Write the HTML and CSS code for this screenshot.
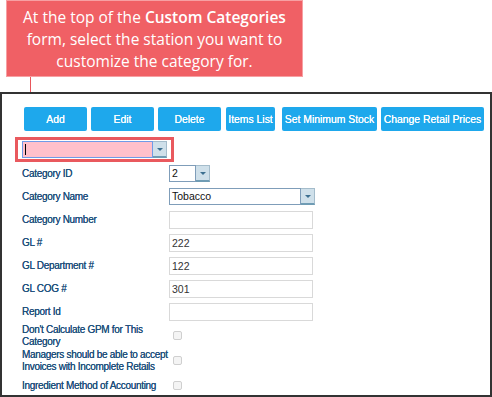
FILE: index.html
```html
<!DOCTYPE html>
<html lang="en">

<head>
  <meta charset="UTF-8">
  <title>Custom Categories</title>
  <link rel="stylesheet" href="styles.css">
</head>

<body>
  <div class="callout">
    At the top of the <b>Custom Categories</b> form, select the station you want to customize the category for.
  </div>
  <div class="connector"></div>

  <div class="frame">
    <div class="toolbar">
      <button class="btn b-add">Add</button>
      <button class="btn b-edit">Edit</button>
      <button class="btn b-delete">Delete</button>
      <button class="btn b-items">Items List</button>
      <button class="btn b-stock">Set Minimum Stock</button>
      <button class="btn b-prices">Change Retail Prices</button>
    </div>

    <div class="station">
      <div class="combo pink">
        <span class="combo-text"><i class="caret"></i></span>
        <span class="combo-btn"><i class="arrow"></i></span>
      </div>
    </div>

    <div class="form">
      <div class="row">
        <label>Category ID</label>
        <div class="combo small">
          <span class="combo-text">2</span>
          <span class="combo-btn"><i class="arrow"></i></span>
        </div>
      </div>
      <div class="row">
        <label>Category Name</label>
        <div class="combo wide">
          <span class="combo-text">Tobacco</span>
          <span class="combo-btn"><i class="arrow"></i></span>
        </div>
      </div>
      <div class="row">
        <label>Category Number</label>
        <input class="field" type="text" value="">
      </div>
      <div class="row">
        <label>GL #</label>
        <input class="field" type="text" value="222">
      </div>
      <div class="row">
        <label>GL Department #</label>
        <input class="field" type="text" value="122">
      </div>
      <div class="row">
        <label>GL COG #</label>
        <input class="field" type="text" value="301">
      </div>
      <div class="row">
        <label>Report Id</label>
        <input class="field" type="text" value="">
      </div>
      <div class="row check">
        <label>Don't Calculate GPM for This Category</label>
        <span class="box"></span>
      </div>
      <div class="row check">
        <label>Managers should be able to accept Invoices with Incomplete Retails</label>
        <span class="box"></span>
      </div>
      <div class="row check">
        <label>Ingredient Method of Accounting</label>
        <span class="box"></span>
      </div>
    </div>
  </div>
</body>

</html>
```

FILE: styles.css
```css
* {
  margin: 0;
  padding: 0;
  box-sizing: border-box;
}

body {
  background: #fff;
  font-family: "Liberation Sans", Arial, sans-serif;
}

.callout {
  margin-left: 6px;
  width: 297px;
  height: 77px;
  padding-top: 5px;
  background: #f06065;
  border: 1px solid #f7a0a3;
  color: #fff;
  font-family: "Open Sans", sans-serif;
  font-size: 15.5px;
  line-height: 22px;
  text-align: center;
}

.callout b {
  font-weight: 600;
}

.connector {
  margin-left: 30px;
  width: 1px;
  height: 15px;
  background: #e8565b;
}

.frame {
  width: 492px;
  height: 305px;
  border: 2px solid #333;
  padding: 13px 0 0 20px;
}

.toolbar {
  display: flex;
  height: 24px;
  margin-left: 2px;
}

.btn {
  height: 24px;
  margin-right: 4px;
  border: none;
  border-radius: 2px;
  background: #1ea8ec;
  color: #fff;
  font-family: "Liberation Sans", Arial, sans-serif;
  font-size: 10.4px;
  white-space: nowrap;
  text-shadow: 0 0 0.4px #fff;
}

.b-add,
.b-edit,
.b-delete {
  width: 63px;
}

.b-delete {
  margin-right: 5px;
}

.b-items {
  width: 49px;
  margin-right: 7px;
}

.b-stock {
  width: 95px;
}

.b-prices {
  width: 103px;
}

.station {
  display: inline-block;
  margin: 6px 0 0 -7px;
  padding: 1px 4px;
  border: 3px solid #e9595e;
}

.combo {
  display: flex;
  height: 17px;
}

.combo-text {
  display: block;
  height: 17px;
  border: 1px solid #7f9db9;
  padding-left: 2px;
  font-size: 10.5px;
  line-height: 15px;
  color: #111;
}

.combo-btn {
  display: flex;
  align-items: center;
  justify-content: center;
  width: 14px;
  height: 17px;
  background: #cfe0ea;
  border: 1px solid #a4bccb;
  border-left: none;
  border-bottom: 2px solid #6f9cb4;
}

.arrow {
  width: 0;
  height: 0;
  border-left: 3px solid transparent;
  border-right: 3px solid transparent;
  border-top: 3px solid #3c6f90;
  border-bottom: none;
}

.pink .combo-text {
  width: 131px;
  background: #ffc0cb;
  border: 1px solid #6f9be8;
}

.caret {
  display: block;
  width: 1px;
  height: 11px;
  margin-top: 2px;
  background: #000;
}

.small .combo-text {
  width: 27px;
}

.wide .combo-text {
  width: 132px;
}

.row {
  display: flex;
  align-items: center;
  min-height: 23px;
}

.row label {
  flex: none;
  width: 148px;
  color: #1e4f7b;
  font-size: 10px;
  letter-spacing: -0.3px;
  line-height: 11.5px;
  text-shadow: 0 0 0.4px #1e4f7b;
}

.field {
  width: 144px;
  height: 18px;
  margin-left: -1px;
  border: 1px solid #d9d9d9;
  padding-left: 2px;
  font-family: "Liberation Sans", Arial, sans-serif;
  font-size: 10.5px;
  color: #333;
  outline: none;
}

.row .combo {
  margin-left: -1px;
}

.row.check {
  min-height: 25px;
}

.box {
  display: block;
  width: 9px;
  height: 9px;
  margin-left: 3px;
  border: 1px solid #cfcfcf;
  border-radius: 2px;
  background: #f4f4f4;
}
```
